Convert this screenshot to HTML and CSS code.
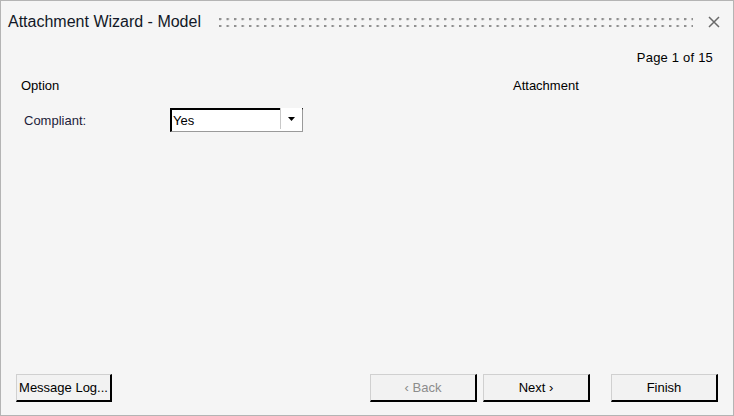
FILE: index.html
```html
<!DOCTYPE html>
<html lang="en">
<head>
  <meta charset="UTF-8" />
  <title>Attachment Wizard - Model</title>
  <link rel="stylesheet" href="styles.css">
</head>
<body>
  <div class="window">
    <div class="titlebar">
      <span class="title">Attachment Wizard - Model</span>
      <span class="grip"></span>
      <span class="close">
        <svg width="14" height="14" viewBox="0 0 14 14">
          <path d="M2 2 L12 12 M12 2 L2 12" stroke="#6a6a6a" stroke-width="1.5" fill="none"/>
        </svg>
      </span>
    </div>

    <div class="content">
      <div class="page">Page 1 of 15</div>
      <div class="heads">
        <span class="head-option">Option</span>
        <span class="head-attach">Attachment</span>
      </div>
      <div class="row">
        <label class="row-label">Compliant:</label>
        <div class="combo">
          <span class="combo-value">Yes</span>
          <span class="combo-btn">
            <svg width="7" height="4" viewBox="0 0 7 4"><path d="M0 0 H7 L3.5 4 Z" fill="#000"/></svg>
          </span>
        </div>
      </div>
    </div>

    <div class="footer">
      <button class="btn btn-log">Message Log...</button>
      <div class="nav">
        <button class="btn" disabled>&lsaquo; Back</button>
        <button class="btn">Next &rsaquo;</button>
        <button class="btn btn-finish">Finish</button>
      </div>
    </div>
  </div>
</body>
</html>
```

FILE: styles.css
```css
body {
  margin: 0;
  font-family: "Liberation Sans", Arial, sans-serif;
  color: #000;
}
.window {
  width: 734px;
  height: 416px;
  box-sizing: border-box;
  border: 1px solid #b4b4b4;
  background: #f5f5f5;
  display: flex;
  flex-direction: column;
}
.titlebar {
  height: 42px;
  display: flex;
  align-items: center;
  padding: 0 12px 0 7px;
}
.title {
  font-size: 16px;
  color: #111827;
  white-space: nowrap;
}
.grip {
  flex: 1;
  align-self: flex-start;
  height: 9px;
  margin: 17px 14px 0 18px;
  background-image: radial-gradient(circle at 1px 1px, #8e8e8e 1.2px, transparent 1.7px);
  background-size: 7.5px 7px;
}
.close {
  display: flex;
  width: 14px;
  height: 14px;
}
.content {
  flex: 1;
  padding: 0 20px;
  font-size: 13px;
}
.page {
  text-align: right;
  margin-top: 7px;
  letter-spacing: 0.2px;
}
.heads {
  display: flex;
  margin-top: 13px;
}
.head-option {
  width: 492px;
}
.row {
  display: flex;
  align-items: center;
  margin-top: 15px;
}
.row-label {
  width: 149px;
  flex-shrink: 0;
  box-sizing: border-box;
  padding-left: 3px;
  color: #1c1c3a;
}
.combo {
  width: 133px;
  height: 24px;
  box-sizing: border-box;
  border-top: 2px solid #000;
  border-left: 2px solid #000;
  border-right: 1px solid #9a9a9a;
  border-bottom: 1px solid #9a9a9a;
  background: #fff;
  display: flex;
  align-items: center;
}
.combo-value {
  flex: 1;
  padding-left: 1px;
}
.combo-btn {
  width: 21px;
  height: 100%;
  border-left: 1px solid #c8c8c8;
  background: #fff;
  display: flex;
  align-items: center;
  justify-content: center;
  margin-top: -4px;
}
.footer {
  display: flex;
  justify-content: space-between;
  padding: 0 15px 13px;
}
.nav {
  display: flex;
  gap: 6px;
}
.btn {
  height: 28px;
  box-sizing: border-box;
  width: 107px;
  font-family: "Liberation Sans", Arial, sans-serif;
  font-size: 13px;
  color: #000;
  background: #f2f2f2;
  border-top: 1px solid #d0d0d0;
  border-left: 1px solid #d0d0d0;
  border-right: 2px solid #000;
  border-bottom: 2px solid #000;
  padding: 0;
}
.btn-log {
  width: 96px;
}
.btn:disabled {
  color: #8c8c8c;
}
.btn-finish {
  margin-left: 15px;
}
```
